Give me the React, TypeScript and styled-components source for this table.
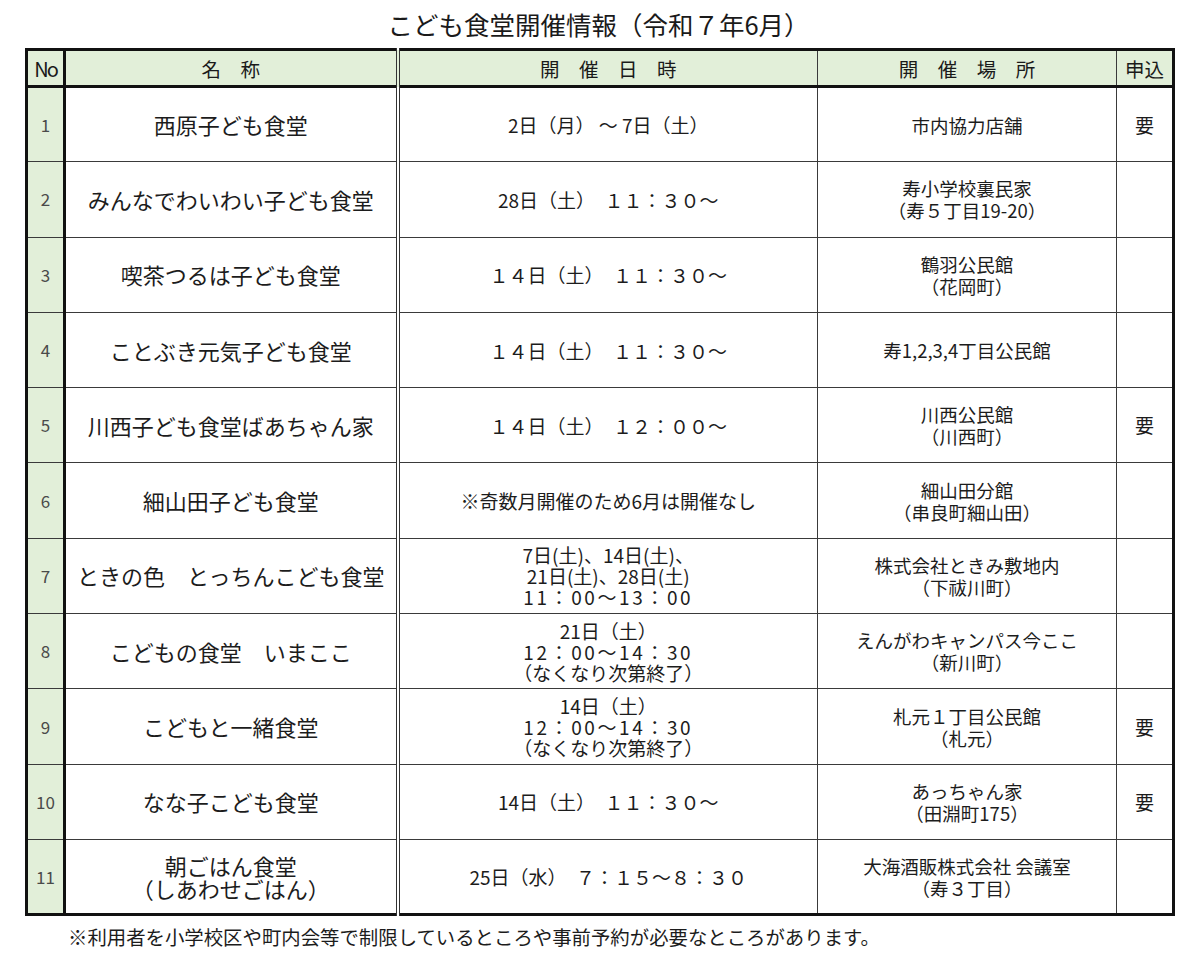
import styled, { createGlobalStyle } from "styled-components";

const GlobalStyle = createGlobalStyle`
  html, body {
    margin: 0;
    padding: 0;
    background: #fff;
  }
  body {
    font-family: "Noto Sans CJK JP", "Noto Sans", sans-serif;
    color: #1c1c1c;
  }
`;

const GREEN = "#e2efd9";
const THICK = "3px solid #111";
const THIN = "1.5px solid #3a3a3a";

const Page = styled.div`
  width: 1200px;
  height: 967px;
  padding: 0 28px 0 25px;
  box-sizing: border-box;
`;

const Title = styled.h1`
  margin: 0;
  height: 46px;
  display: flex;
  align-items: center;
  justify-content: center;
  padding: 0 0 2px 0;
  font-size: 25.5px;
  font-weight: 400;
  color: #1a1a1a;
`;

const Table = styled.table`
  width: 1147px;
  border-collapse: collapse;
  table-layout: fixed;
  border: ${THICK};
`;

const HeadRow = styled.tr`
  height: 37px;
  background: ${GREEN};
  border-bottom: ${THICK};
`;

const Row = styled.tr`
  height: 75.3px;
  border-bottom: ${THIN};
  &:last-child {
    border-bottom: none;
  }
`;

type Col = "no" | "name" | "date" | "place" | "apply";

const borderRight: Record<Col, string> = {
  no: THICK,
  name: "4px double #333",
  date: THIN,
  place: THIN,
  apply: "none",
};

const fontSize: Record<Col, string> = {
  no: "17px",
  name: "22px",
  date: "19px",
  place: "18.5px",
  apply: "19px",
};

const Th = styled.th<{ $col: Col }>`
  padding: 0;
  font-weight: 400;
  font-size: ${(p) => (p.$col === "no" ? "20px" : "19.5px")};
  letter-spacing: ${(p) => (p.$col === "no" ? "-2px" : "0")};
  text-align: center;
  vertical-align: middle;
  border-right: ${(p) => borderRight[p.$col]};
  color: #1a1a1a;
`;

const Td = styled.td<{ $col: Col }>`
  padding: 0;
  text-align: center;
  vertical-align: middle;
  border-right: ${(p) => borderRight[p.$col]};
  background: ${(p) => (p.$col === "no" ? GREEN : "#fff")};
  font-size: ${(p) => fontSize[p.$col]};
  line-height: ${(p) => (p.$col === "name" ? "23px" : p.$col === "date" ? "21px" : "22px")};
  color: ${(p) => (p.$col === "no" ? "#4a4a4a" : "#1c1c1c")};
  white-space: nowrap;
`;

const Line = styled.div<{ $spaced?: boolean }>`
  display: block;
  letter-spacing: ${(p) => (p.$spaced ? "2.6px" : "0")};
`;

const Note = styled.p`
  margin: 0;
  padding: 6px 0 0 43px;
  font-size: 19.4px;
  color: #1c1c1c;
`;

// lines starting with "~" get the wide time spacing
const Stack = ({ lines }: { lines: string[] }) => (
  <>
    {lines.map((l, i) =>
      l.startsWith("~") ? (
        <Line key={i} $spaced>
          {l.slice(1)}
        </Line>
      ) : (
        <Line key={i}>{l}</Line>
      )
    )}
  </>
);

interface Entry {
  name: string[];
  date: string[];
  place: string[];
  apply?: boolean;
}

const entries: Entry[] = [
  { name: ["西原子ども食堂"], date: ["2日（月） ～ 7日（土）"], place: ["市内協力店舗"], apply: true },
  { name: ["みんなでわいわい子ども食堂"], date: ["28日（土）　１１：３０～"], place: ["寿小学校裏民家", "（寿５丁目19-20）"] },
  { name: ["喫茶つるは子ども食堂"], date: ["１４日（土）　１１：３０～"], place: ["鶴羽公民館", "（花岡町）"] },
  { name: ["ことぶき元気子ども食堂"], date: ["１４日（土）　１１：３０～"], place: ["寿1,2,3,4丁目公民館"] },
  { name: ["川西子ども食堂ばあちゃん家"], date: ["１４日（土）　１２：００～"], place: ["川西公民館", "（川西町）"], apply: true },
  { name: ["細山田子ども食堂"], date: ["※奇数月開催のため6月は開催なし"], place: ["細山田分館", "（串良町細山田）"] },
  {
    name: ["ときの色　とっちんこども食堂"],
    date: ["7日(土)、14日(土)、", "21日(土)、28日(土)", "~11：00～13：00"],
    place: ["株式会社ときみ敷地内", "（下祓川町）"],
  },
  {
    name: ["こどもの食堂　いまここ"],
    date: ["21日（土）", "~12：00～14：30", "（なくなり次第終了）"],
    place: ["えんがわキャンパス今ここ", "（新川町）"],
  },
  {
    name: ["こどもと一緒食堂"],
    date: ["14日（土）", "~12：00～14：30", "（なくなり次第終了）"],
    place: ["札元１丁目公民館", "（札元）"],
    apply: true,
  },
  { name: ["なな子こども食堂"], date: ["14日（土）　１１：３０～"], place: ["あっちゃん家", "（田淵町175）"], apply: true },
  {
    name: ["朝ごはん食堂", "（しあわせごはん）"],
    date: ["25日（水）　７：１５～８：３０"],
    place: ["大海酒販株式会社 会議室", "（寿３丁目）"],
  },
];

const App = () => {
  return (
    <Page>
      <GlobalStyle />
      <Title>こども食堂開催情報（令和７年6月）</Title>
      <Table>
        <colgroup>
          <col style={{ width: 38 }} />
          <col style={{ width: 333 }} />
          <col style={{ width: 420 }} />
          <col style={{ width: 299 }} />
          <col style={{ width: 57 }} />
        </colgroup>
        <thead>
          <HeadRow>
            <Th $col="no">No</Th>
            <Th $col="name">名　称</Th>
            <Th $col="date">開　催　日　時</Th>
            <Th $col="place">開　催　場　所</Th>
            <Th $col="apply">申込</Th>
          </HeadRow>
        </thead>
        <tbody>
          {entries.map((e, i) => (
            <Row key={i}>
              <Td $col="no">{i + 1}</Td>
              <Td $col="name">
                <Stack lines={e.name} />
              </Td>
              <Td $col="date">
                <Stack lines={e.date} />
              </Td>
              <Td $col="place">
                <Stack lines={e.place} />
              </Td>
              <Td $col="apply">{e.apply ? "要" : ""}</Td>
            </Row>
          ))}
        </tbody>
      </Table>
      <Note>※利用者を小学校区や町内会等で制限しているところや事前予約が必要なところがあります。</Note>
    </Page>
  );
};

export default App;
